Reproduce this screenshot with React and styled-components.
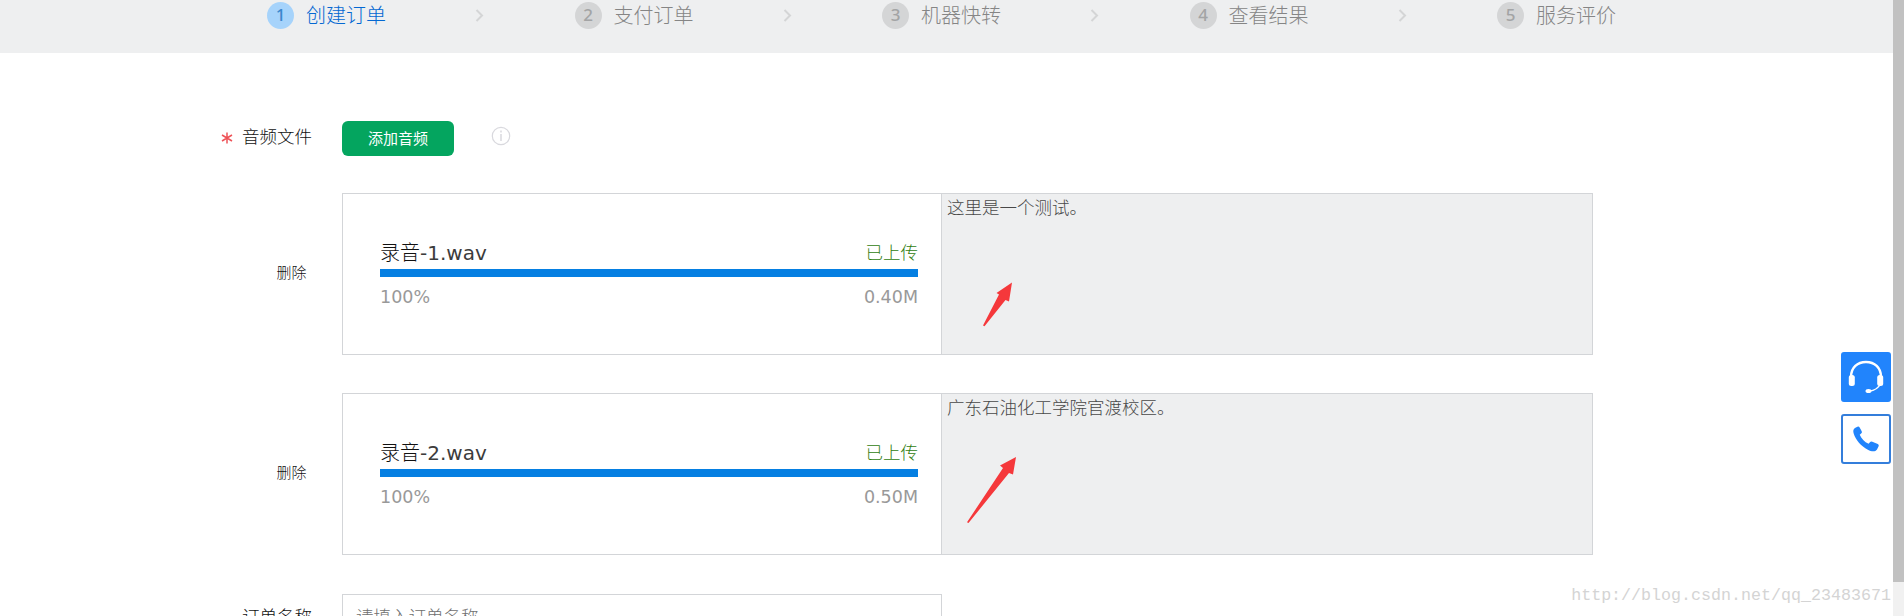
import React from "react";
import styled, { createGlobalStyle } from "styled-components";

const GlobalStyle = createGlobalStyle`
  * { box-sizing: border-box; }
  body { margin: 0; background: #fff; overflow: hidden; }
`;

const Page = styled.div`
  position: relative;
  display: flex;
  width: 100%;
  height: 616px;
  overflow: hidden;
  font-family: "Noto Sans CJK SC", sans-serif;
  font-weight: 300;
  font-size: 17.5px;
  color: #111;
`;

const Content = styled.main`
  flex: 1;
  min-width: 0;
`;

const Steps = styled.header`
  display: flex;
  height: 53px;
  padding: 0 0 0 267px;
  background: #eeeff0;
`;

const Step = styled.div`
  display: flex;
  align-items: center;
  flex: none;
  width: 307.5px;
  height: 31px;
  font-size: 20px;
  line-height: 30px;
  color: ${(p) => (p.$active ? "#0468d2" : "#858585")};
`;

const StepNumber = styled.span`
  width: 27px;
  height: 27px;
  margin-right: 12px;
  border-radius: 50%;
  background: ${(p) => (p.$active ? "#a6d3fb" : "#d4d5d6")};
  color: ${(p) => (p.$active ? "#3b86cd" : "#a3a4a5")};
  font: 500 17px/26px "Noto Sans", sans-serif;
  text-align: center;
`;

const StepLabel = styled.span`
  padding-bottom: 2px;
`;

const StepArrow = styled.svg`
  margin-left: 89px;
`;

const Form = styled.section`
  padding-top: 68px;
`;

const Row = styled.div`
  display: flex;
  height: ${(p) => p.$height}px;
  margin-bottom: ${(p) => p.$gap || 0}px;
`;

const Label = styled.div`
  display: flex;
  flex: none;
  justify-content: flex-end;
  align-items: center;
  width: 342px;
  height: ${(p) => p.$height};
  padding-right: ${(p) => (p.$small ? 35.5 : 30)}px;
  font-size: ${(p) => (p.$small ? 15 : 17.5)}px;
`;

const Required = styled.svg`
  margin: 4px 9px 0 0;
`;

const AddButton = styled.button`
  width: 112px;
  height: 35px;
  padding: 0 0 1px;
  border: 0;
  border-radius: 6px;
  background: #04a55f;
  color: #fff;
  font: 400 15px/34px "Noto Sans CJK SC", sans-serif;
`;

const InfoIcon = styled.svg`
  margin: 5px 0 0 37px;
`;

const Card = styled.div`
  display: flex;
  width: 1251px;
  border: 1px solid #d3d5d8;
`;

const Upload = styled.div`
  width: 598px;
  padding: 43px 23px 0 37px;
`;

const Line = styled.div`
  display: flex;
  justify-content: space-between;
  height: 32px;
  line-height: 30px;
`;

const FileName = styled.span`
  font-size: 20px;
`;

const Latin = styled.span`
  font-family: "DejaVu Sans", sans-serif;
  font-weight: 400;
  color: #3c3c3c;
`;

const Status = styled.span`
  color: #2f7d10;
`;

const Bar = styled.div`
  height: 8px;
  margin-bottom: 5px;
  background: #057fe2;
`;

const Muted = styled(Latin)`
  color: #999;
`;

const Transcript = styled.div`
  position: relative;
  flex: 1;
  padding: 0 0 0 5px;
  border-left: 1px solid #d3d5d8;
  background: #eeeff0;
  line-height: 26px;
  color: #484848;
`;

const Pointer = styled.svg`
  position: absolute;
  left: 0;
  top: 0;
`;

const NameInput = styled.input`
  width: 600px;
  height: 44px;
  padding: 0 13px 2px;
  border: 1px solid #d3d5d8;
  outline: none;
  font: 300 17.5px "Noto Sans CJK SC", sans-serif;
  &::placeholder { color: #707070; opacity: 1; }
`;

const Scrollbar = styled.aside`
  width: 11px;
  background: #f1f1f1;
`;

const Thumb = styled.div`
  height: 582px;
  background: #c1c1c1;
`;

const Contact = styled.nav`
  position: absolute;
  right: 13px;
  top: 352px;
  display: grid;
  gap: 12px;
`;

const ContactButton = styled.a`
  display: grid;
  place-items: center;
  width: 50px;
  height: 50px;
  border: 2px solid ${(p) => (p.$filled ? "#2184fc" : "#347edb")};
  border-radius: 3px;
  background: ${(p) => (p.$filled ? "#2184fc" : "#fff")};
`;

const Watermark = styled.div`
  position: absolute;
  right: 13px;
  top: 584px;
  font: 400 16.66px/24px "Liberation Mono", monospace;
  color: #d4d4d4;
`;

const steps = ["创建订单", "支付订单", "机器快转", "查看结果", "服务评价"];

const files = [
  {
    name: "录音",
    suffix: "-1.wav",
    size: "0.40M",
    text: "这里是一个测试。",
    arrow: "70,88.5 54.5,99 57,100.5 41,131.5 42.5,132.3 63.5,106 67,107.5",
  },
  {
    name: "录音",
    suffix: "-2.wav",
    size: "0.50M",
    text: "广东石油化工学院官渡校区。",
    arrow: "74,63 58,71.5 61,74 25,128.3 26.5,129 67,79 71,80.5",
  },
];

export default function App() {
  return (
    <Page lang="zh-CN">
      <GlobalStyle />
      <Content>
        <Steps>
          {steps.map((label, i) => (
            <Step key={label} $active={i === 0}>
              <StepNumber $active={i === 0}>{i + 1}</StepNumber>
              <StepLabel>{label}</StepLabel>
              {i < steps.length - 1 && (
                <StepArrow width="9" height="13" viewBox="0 0 9 13" fill="none" stroke="#d4d5d6" strokeWidth="2">
                  <path d="M1.5 1 7 6.5 1.5 12" />
                </StepArrow>
              )}
            </Step>
          ))}
        </Steps>
        <Form>
          <Row $height={35} $gap={37}>
            <Label $height="29px">
              <Required width="12" height="12" viewBox="0 0 12 12" stroke="#ee5358" strokeWidth="1.5">
                <path d="M6 .5v11M1 3l10 6M11 3 1 9" />
              </Required>
              音频文件
            </Label>
            <AddButton>添加音频</AddButton>
            <InfoIcon width="20" height="20" viewBox="0 0 20 20" fill="none" stroke="#d9d9de">
              <circle cx="10" cy="10" r="8.7" strokeWidth="1.2" />
              <path d="M10 4.5v2M10 8v7" strokeWidth="1.5" />
            </InfoIcon>
          </Row>
          {files.map((file, i) => (
            <Row key={file.suffix} $height={162} $gap={i ? 39 : 38}>
              <Label $small $height="156px">删除</Label>
              <Card>
                <Upload>
                  <Line>
                    <FileName>{file.name}<Latin>{file.suffix}</Latin></FileName>
                    <Status>已上传</Status>
                  </Line>
                  <Bar />
                  <Line>
                    <Muted>100%</Muted>
                    <Muted>{file.size}</Muted>
                  </Line>
                </Upload>
                <Transcript>
                  {file.text}
                  <Pointer width="90" height="140">
                    <polygon points={file.arrow} fill="#f5383b" />
                  </Pointer>
                </Transcript>
              </Card>
            </Row>
          ))}
          <Row $height={44}>
            <Label $height="42px">订单名称</Label>
            <NameInput placeholder="请填入订单名称" />
          </Row>
        </Form>
      </Content>
      <Scrollbar>
        <Thumb />
      </Scrollbar>
      <Contact>
        <ContactButton $filled>
          <svg width="38" height="38" viewBox="0 0 38 38" fill="none" stroke="#fff">
            <path d="M4 19C4 9.5 10.5 4 19 4S34 9.5 34 19" strokeWidth="2.5" />
            <path d="M33.5 26c-2.5 4.5-6 6.600-11 7" strokeWidth="1.5" />
            <rect x="1.800" y="17" width="6" height="11" rx="2.500" fill="#fff" stroke="none" />
            <rect x="30.200" y="17" width="6" height="11" rx="2.500" fill="#fff" stroke="none" />
            <ellipse cx="21.500" cy="33" rx="3" ry="2" fill="#fff" stroke="none" />
          </svg>
        </ContactButton>
        <ContactButton>
          <svg width="28" height="28" viewBox="0 0 30 30" fill="#2184fc">
            <path d="M3.2 3.2 5.8 1.8Q7.300 1.100 8.200 2.600L10.400 6.600Q11.200 8.200 9.800 9.200L8.300 10.400C10 14.600 13.400 18 17.800 20.200L19.200 18.500Q20.200 17.200 21.800 17.900L27.600 20.300Q29.300 21.300 28.500 22.900L26.800 26.200C25 28.900 21.200 28.800 17 26.600C9.600 22.700 4 16.300 1.800 9.200C1 6.400 1.300 4.400 3.200 3.200Z" />
          </svg>
        </ContactButton>
      </Contact>
      <Watermark>http://blog.csdn.net/qq_23483671</Watermark>
    </Page>
  );
}
